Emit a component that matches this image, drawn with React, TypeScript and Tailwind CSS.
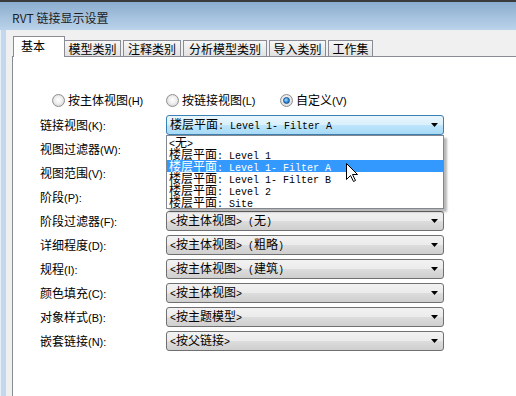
import React from "react";

// split text into ascii / non-ascii runs so the latin part can use its own font
function Mixed({ text, latin }: { text: string; latin: string }) {
  const parts = text.match(/[\x00-\x7f]+|[^\x00-\x7f]+/g) || [];
  return (
    <>
      {parts.map((p, i) =>
        /^[\x00-\x7f]+$/.test(p) ? (
          <span key={i} className={latin}>
            {p}
          </span>
        ) : (
          <span key={i}>{p}</span>
        ),
      )}
    </>
  );
}

const MONO = "font-['Liberation_Mono',monospace] text-[10px]";
const SANS = "font-['Liberation_Sans',sans-serif] text-[11px]";

function Radio({ checked, label }: { checked?: boolean; label: string }) {
  return (
    <div className="w-[114px] flex items-center gap-[3px]">
      <div className="w-[13px] h-[13px] rounded-full border border-[#8e8f8f] bg-[radial-gradient(circle_at_50%_45%,#ffffff_0%,#eeeeee_45%,#c9c9c9_100%)] flex items-center justify-center">
        {checked && (
          <div className="w-[7px] h-[7px] rounded-full border border-[#1b4f86] bg-[radial-gradient(circle_at_40%_35%,#a6dcff_0%,#2d8ee0_55%,#0d4a8c_100%)]" />
        )}
      </div>
      <span className="whitespace-pre leading-[16px]">
        <Mixed text={label} latin={SANS} />
      </span>
    </div>
  );
}

function Combo({ text, active }: { text: string; active?: boolean }) {
  return (
    <div
      className={
        active
          ? "w-[278px] h-[20px] rounded-[3px] border border-[#3c7fb1] bg-[linear-gradient(#eaf6fd_0%,#d9f0fc_50%,#bee6fd_50%,#a7d9f5_100%)] flex items-center pl-[3px] pr-[5px]"
          : "w-[278px] h-[20px] rounded-[3px] border border-[#707070] bg-[linear-gradient(#f2f2f2_0%,#ebebeb_50%,#dddddd_50%,#cfcfcf_100%)] flex items-center pl-[3px] pr-[5px]"
      }
    >
      <span className="flex-1 whitespace-pre leading-[18px]">
        <Mixed text={text} latin={MONO} />
      </span>
      <svg width="7" height="4" viewBox="0 0 7 4">
        <path d="M0 0h7L3.5 4z" fill="#000" />
      </svg>
    </div>
  );
}

const tabs = [
  { label: "模型类别", w: "w-[57px]" },
  { label: "注释类别", w: "w-[58px]" },
  { label: "分析模型类别", w: "w-[84px]" },
  { label: "导入类别", w: "w-[57px]" },
  { label: "工作集", w: "w-[45px]" },
];

const rows = [
  { label: "链接视图(K):", value: "楼层平面: Level 1- Filter A" },
  { label: "视图过滤器(W):", value: "<按主体视图>" },
  { label: "视图范围(V):", value: "<按主体视图>" },
  { label: "阶段(P):", value: "<按主体视图>" },
  { label: "阶段过滤器(F):", value: "<按主体视图> (无)" },
  { label: "详细程度(D):", value: "<按主体视图> (粗略)" },
  { label: "规程(I):", value: "<按主体视图> (建筑)" },
  { label: "颜色填充(C):", value: "<按主体视图>" },
  { label: "对象样式(B):", value: "<按主题模型>" },
  { label: "嵌套链接(N):", value: "<按父链接>" },
];

const options = [
  "<无>",
  "楼层平面: Level 1",
  "楼层平面: Level 1- Filter A",
  "楼层平面: Level 1- Filter B",
  "楼层平面: Level 2",
  "楼层平面: Site",
];

export default function App() {
  return (
    <div className="w-[516px] h-[396px] overflow-hidden flex flex-col bg-[#c3d8ee] font-['Noto_Sans_CJK_SC',sans-serif] text-[12px] text-black">
      {/* TITLE */}
      <div className="h-[30px] shrink-0 border-t-2 border-[#3b3b3b] bg-gradient-to-b from-[#8badce] to-[#bbd3eb] flex items-center pl-[12px] pt-[3px] text-[#1e1e1e]">
        RVT 链接显示设置
      </div>

      <div className="flex-1 flex min-h-0">
        <div className="w-[6px] shrink-0 border-l border-[#e6eef6] bg-[#c3d8ee]" />
        <div className="flex-1 flex flex-col bg-[#f0f0f0] pl-[6px] pt-[6px]">
          {/* TABS */}
          <div className="h-[20px] shrink-0 flex items-end pl-[1px] relative z-10">
            <div className="w-[52px] h-[21px] -mb-px bg-white border border-b-0 border-[#898c95] pl-[7px] leading-[17px]">
              基本
            </div>
            <div className="flex items-end gap-[2px] -ml-px">
              {tabs.map((t) => (
                <div
                  key={t.label}
                  className={`${t.w} h-[16px] border border-b-0 border-[#898c95] bg-gradient-to-b from-[#f7f7f7] to-[#e1e1e1] text-center leading-[15px]`}
                >
                  {t.label}
                </div>
              ))}
            </div>
          </div>

          {/* PANEL */}
          <div className="flex-1 bg-white border-t border-l border-[#898c95] pl-[27px] pt-[31px]">
            <div className="h-[25px] flex items-center pl-[12px]">
              <Radio label="按主体视图(H)" />
              <Radio label="按链接视图(L)" />
              <Radio label="自定义(V)" checked />
            </div>

            <div className="relative">
              {rows.map((r, i) => (
                <div key={r.label} className="h-[24px] flex items-center">
                  <div className="w-[126px] whitespace-pre leading-[16px]">
                    <Mixed text={r.label} latin={SANS} />
                  </div>
                  <Combo text={r.value} active={i === 0} />
                </div>
              ))}

              {/* DROPDOWN */}
              <div className="absolute left-[126px] top-[22px] w-[278px] z-20 bg-white border border-[#828790] shadow-[3px_3px_2px_rgba(0,0,0,0.28)]">
                {options.map((o, i) => (
                  <div
                    key={o}
                    className={
                      i === 2
                        ? "h-[12px] leading-[12px] pl-[2px] whitespace-pre bg-[#3399ff] text-white"
                        : "h-[12px] leading-[12px] pl-[2px] whitespace-pre"
                    }
                  >
                    <Mixed text={o} latin={MONO} />
                  </div>
                ))}
                <svg
                  className="absolute left-[179px] top-[27px]"
                  width="13"
                  height="20"
                  viewBox="0 0 13 20"
                >
                  <path
                    d="M0.5 0.5 L0.5 16.5 L4.5 12.5 L7.5 18.5 L9.5 17.5 L6.5 11.5 L11.5 11.5 Z"
                    fill="#fff"
                    stroke="#000"
                    strokeWidth="1"
                  />
                </svg>
              </div>
            </div>
          </div>
        </div>
      </div>
    </div>
  );
}
